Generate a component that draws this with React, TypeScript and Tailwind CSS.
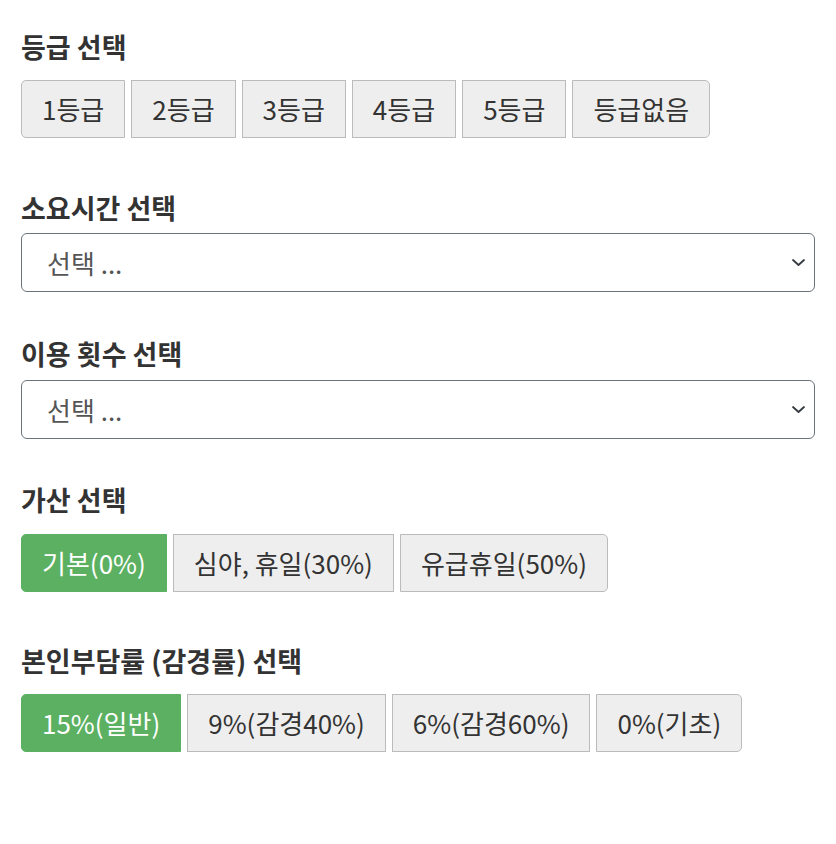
import { useState } from 'react';

const FONT = { fontFamily: '"Noto Sans CJK KR", "Noto Sans", sans-serif' };

function ButtonGroup({
  options,
  value,
  onChange,
}: {
  options: string[];
  value: number;
  onChange: (i: number) => void;
}) {
  return (
    <div className="flex gap-[6px]">
      {options.map((label, i) => {
        const active = i === value;
        const first = i === 0;
        const last = i === options.length - 1;
        return (
          <button
            key={label}
            type="button"
            onClick={() => onChange(i)}
            className={`h-[58px] border px-[20px] text-[26px] font-normal leading-none ${
              first ? 'rounded-l-[5px]' : ''
            } ${last ? 'rounded-r-[5px]' : ''} ${
              active
                ? 'border-[#5cb062] bg-[#5cb062] text-white'
                : 'border-[#bbbbbb] bg-[#eeeeee] text-[#333333]'
            }`}
          >
            {label}
          </button>
        );
      })}
    </div>
  );
}

function Select() {
  return (
    <div className="relative">
      <select
        defaultValue=""
        className="h-[59px] w-full appearance-none rounded-[6px] border border-[#6b737b] bg-white pl-[25px] text-[26px] font-normal text-[#555555] outline-none"
      >
        <option value="">선택 ...</option>
      </select>
      <svg
        className="pointer-events-none absolute right-[9px] top-[25px] h-[9px] w-[15px]"
        viewBox="0 0 15 9"
        fill="none"
        stroke="#343a40"
        strokeWidth="1.8"
        strokeLinecap="round"
        strokeLinejoin="round"
      >
        <path d="M2 2l5.5 5 5.5-5" />
      </svg>
    </div>
  );
}

export default function App() {
  const [grade, setGrade] = useState(-1);
  const [extra, setExtra] = useState(0);
  const [rate, setRate] = useState(0);

  return (
    <div className="px-[21px] pt-[30px] text-[#333333]" style={FONT}>
      {/* 등급 */}
      <h2 className="text-[27px] font-bold leading-[34px]">등급 선택</h2>
      <div className="mt-[16px]">
        <ButtonGroup
          options={['1등급', '2등급', '3등급', '4등급', '5등급', '등급없음']}
          value={grade}
          onChange={setGrade}
        />
      </div>

      {/* 소요시간 */}
      <h2 className="mt-[53px] text-[27px] font-bold leading-[34px]">소요시간 선택</h2>
      <div className="mt-[8px]">
        <Select />
      </div>

      {/* 이용 횟수 */}
      <h2 className="mt-[45px] text-[27px] font-bold leading-[34px]">이용 횟수 선택</h2>
      <div className="mt-[9px]">
        <Select />
      </div>

      {/* 가산 */}
      <h2 className="mt-[44px] text-[27px] font-bold leading-[34px]">가산 선택</h2>
      <div className="mt-[17px]">
        <ButtonGroup
          options={['기본(0%)', '심야, 휴일(30%)', '유급휴일(50%)']}
          value={extra}
          onChange={setExtra}
        />
      </div>

      {/* 본인부담률 */}
      <h2 className="mt-[52px] text-[27px] font-bold leading-[34px]">본인부담률 (감경률) 선택</h2>
      <div className="mt-[16px]">
        <ButtonGroup
          options={['15%(일반)', '9%(감경40%)', '6%(감경60%)', '0%(기초)']}
          value={rate}
          onChange={setRate}
        />
      </div>
    </div>
  );
}
